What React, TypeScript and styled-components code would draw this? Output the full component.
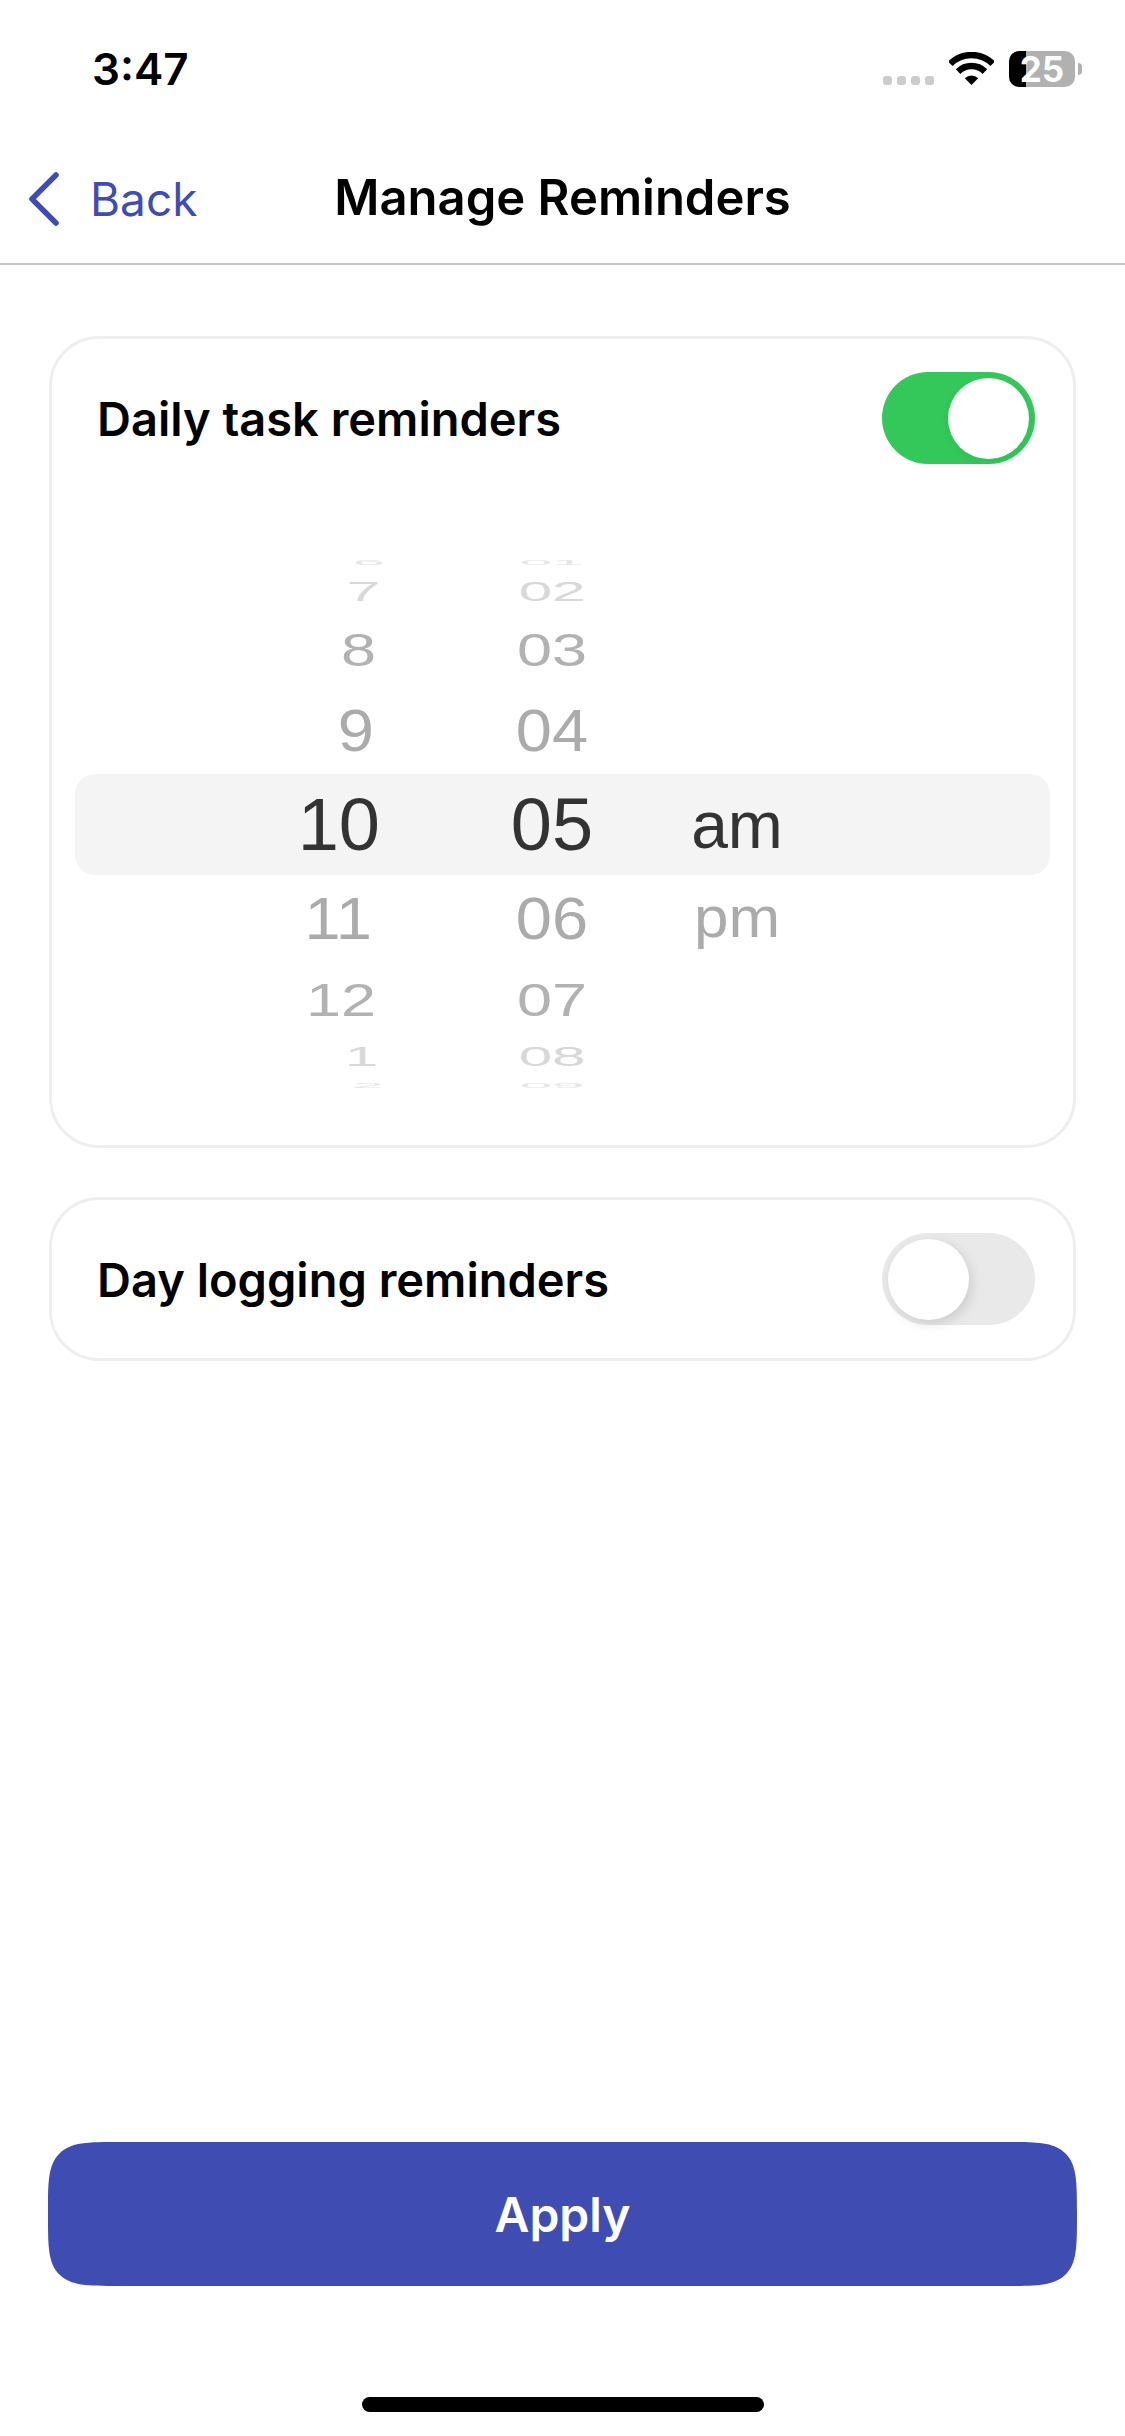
import styled, { createGlobalStyle } from "styled-components";

const GlobalStyle = createGlobalStyle`
  html, body {
    margin: 0;
    padding: 0;
    background: #fff;
  }
`;

const Page = styled.div`
  width: 1125px;
  height: 2436px;
  display: flex;
  flex-direction: column;
  background: #fff;
  font-family: Inter, "Liberation Sans", sans-serif;
  color: #000;
  overflow: hidden;
`;

const StatusBar = styled.div`
  height: 120px;
  box-sizing: border-box;
  padding: 18px 43px 0 92px;
  display: flex;
  align-items: center;
  justify-content: space-between;
`;

const Time = styled.span`
  font-size: 44px;
  font-weight: 600;
  line-height: 1;
`;

const StatusIcons = styled.div`
  display: flex;
  align-items: flex-end;
  gap: 15px;
`;

const SignalDots = styled.div`
  display: flex;
  gap: 5px;
  margin-bottom: 2px;
`;

const Dot = styled.i`
  width: 9px;
  height: 9px;
  border-radius: 3px;
  background: #cccccc;
`;

const Wifi = styled.svg`
  display: block;
  margin-bottom: 2px;
`;

const Battery = styled.div`
  position: relative;
  width: 66px;
  height: 36px;
  margin-right: 7px;
  border-radius: 10px;
  background: linear-gradient(90deg, #000 26%, #b1b1b1 26%);
  color: #fff;
  font-size: 35px;
  font-weight: 700;
  line-height: 36px;
  text-align: center;
  &::after {
    content: "";
    position: absolute;
    right: -7px;
    top: 12px;
    width: 4px;
    height: 12px;
    border-radius: 0 4px 4px 0;
    background: #b1b1b1;
  }
`;

const Header = styled.header`
  height: 145px;
  box-sizing: border-box;
  border-bottom: 2px solid #c4c4c4;
  padding: 14px 0 0;
  display: grid;
  grid-template-columns: 1fr auto 1fr;
  align-items: center;
`;

const BackButton = styled.div`
  display: flex;
  align-items: center;
  gap: 30px;
  padding-left: 28px;
  color: #3f4db3;
  font-size: 46px;
  font-weight: 400;
`;

const Title = styled.h1`
  margin: 0;
  font-size: 49px;
  font-weight: 600;
  line-height: 1.2;
`;

const Content = styled.main`
  flex: 1;
  padding: 71px 49px 0;
  display: flex;
  flex-direction: column;
  gap: 49px;
`;

const Card = styled.section`
  box-sizing: border-box;
  border: 3px solid #eeeeee;
  border-radius: 50px;
  padding: 33px 38px 33px 45px;
`;

const PickerCard = styled(Card)`
  height: 812px;
`;

const SettingRow = styled.div`
  display: flex;
  align-items: center;
  justify-content: space-between;
`;

const SettingLabel = styled.span`
  font-size: 47px;
  font-weight: 600;
`;

const Track = styled.div<{ $on: boolean }>`
  width: 153px;
  height: 92px;
  box-sizing: border-box;
  padding: 6px;
  border-radius: 46px;
  display: flex;
  justify-content: ${(p) => (p.$on ? "flex-end" : "flex-start")};
  background: ${(p) => (p.$on ? "#34c759" : "#e9e9e9")};
`;

const Knob = styled.div<{ $on: boolean }>`
  width: 81px;
  height: 81px;
  margin-top: -0.5px;
  border-radius: 50%;
  background: #fff;
  box-shadow: ${(p) =>
    p.$on ? "0 3px 8px rgba(0,0,0,.05)" : "3px 4px 12px rgba(0,0,0,.12)"};
`;

const Wheel = styled.div`
  position: relative;
  height: 541px;
  margin: 90px -15px 0 -22px;
  display: flex;
`;

const Highlight = styled.div`
  position: absolute;
  left: 0;
  right: 0;
  top: 220px;
  height: 101px;
  border-radius: 20px;
  background: #f4f4f4;
`;

const WheelColumn = styled.div<{ $width: number; $align: string }>`
  position: relative;
  width: ${(p) => p.$width}px;
  display: flex;
  flex-direction: column;
  align-items: ${(p) => p.$align};
`;

const WheelRow = styled.div<{ $h: number }>`
  height: ${(p) => p.$h}px;
  display: flex;
  align-items: center;
`;

const WheelText = styled.span<{ $size: number; $scale: number; $color: string; $dx: number }>`
  font-family: "Liberation Sans", Arial, sans-serif;
  font-size: ${(p) => p.$size}px;
  line-height: 1;
  white-space: nowrap;
  color: ${(p) => p.$color};
  transform: translateX(${(p) => p.$dx}px) scaleY(${(p) => p.$scale});
`;

const Spacer = styled.div`
  width: 100px;
`;

const ApplyButton = styled.button`
  margin: 0 48px;
  height: 144px;
  border: 0;
  border-radius: 48px;
  background: #3f4db3;
  color: #fff;
  font-family: Inter, "Liberation Sans", sans-serif;
  font-size: 48px;
  font-weight: 600;
  @supports (corner-shape: squircle) {
    border-radius: 72px;
    corner-shape: squircle;
  }
`;

const HomeArea = styled.div`
  height: 150px;
  box-sizing: border-box;
  padding-top: 111px;
  display: flex;
  justify-content: center;
`;

const HomeBar = styled.div`
  width: 402px;
  height: 15px;
  border-radius: 8px;
  background: #000;
`;

// height, scaleY, font size, colour of each wheel position, top to bottom
const rows = [
  { h: 16, s: 0.14, size: 58, c: "#e6e6e6" },
  { h: 44, s: 0.46, size: 60, c: "#d8d8d8" },
  { h: 72, s: 0.74, size: 63, c: "#b2b2b2" },
  { h: 89, s: 0.92, size: 65, c: "#ababab" },
  { h: 100, s: 1, size: 74, c: "#333333" },
  { h: 86, s: 0.92, size: 65, c: "#ababab" },
  { h: 78, s: 0.74, size: 63, c: "#b2b2b2" },
  { h: 36, s: 0.46, size: 60, c: "#d8d8d8" },
  { h: 20, s: 0.14, size: 58, c: "#e6e6e6" },
];

const hours = ["6", "7", "8", "9", "10", "11", "12", "1", "2"];
const hourShift = [5, 0, -4, -6, 0, -8, -4, -2, 4];
const minutes = ["01", "02", "03", "04", "05", "06", "07", "08", "09"];
const periods = ["", "", "", "", "am", "pm", "", "", ""];

function Toggle({ on }: { on: boolean }) {
  return (
    <Track $on={on}>
      <Knob $on={on} />
    </Track>
  );
}

function Column({ labels, width, align, shift }: { labels: string[]; width: number; align: string; shift?: number[] }) {
  return (
    <WheelColumn $width={width} $align={align}>
      {labels.map((label, i) => (
        <WheelRow key={i} $h={rows[i].h}>
          <WheelText
            $size={label === "am" ? 66 : label === "pm" ? 62 : rows[i].size}
            $scale={rows[i].s}
            $color={rows[i].c}
            $dx={shift ? shift[i] : 0}
          >
            {label}
          </WheelText>
        </WheelRow>
      ))}
    </WheelColumn>
  );
}

function App() {
  return (
    <Page>
      <GlobalStyle />
      <StatusBar>
        <Time>3:47</Time>
        <StatusIcons>
          <SignalDots>
            <Dot />
            <Dot />
            <Dot />
            <Dot />
          </SignalDots>
          <Wifi width="45" height="33" viewBox="0 0 45 33">
            <path d="M1.3 11.8A30 30 0 0 1 43.7 11.8" fill="none" stroke="#000" strokeWidth="6.5" />
            <path d="M9.1 19.6A19 19 0 0 1 35.9 19.6" fill="none" stroke="#000" strokeWidth="6.5" />
            <path d="M22.5 33L15.8 26.3A9.5 9.5 0 0 1 29.2 26.3Z" fill="#000" />
          </Wifi>
          <Battery>25</Battery>
        </StatusIcons>
      </StatusBar>

      <Header>
        <BackButton>
          <svg width="32" height="56" viewBox="0 0 32 56">
            <path d="M28 4L4 28L28 52" fill="none" stroke="#3f4db3" strokeWidth="5.5" strokeLinecap="round" strokeLinejoin="round" />
          </svg>
          Back
        </BackButton>
        <Title>Manage Reminders</Title>
      </Header>

      <Content>
        <PickerCard>
          <SettingRow>
            <SettingLabel>Daily task reminders</SettingLabel>
            <Toggle on />
          </SettingRow>
          <Wheel>
            <Highlight />
            <Column labels={hours} width={305} align="flex-end" shift={hourShift} />
            <Spacer />
            <Column labels={minutes} width={144} align="center" />
            <Column labels={periods} width={226} align="center" />
          </Wheel>
        </PickerCard>
        <Card>
          <SettingRow>
            <SettingLabel>Day logging reminders</SettingLabel>
            <Toggle on={false} />
          </SettingRow>
        </Card>
      </Content>

      <ApplyButton>Apply</ApplyButton>
      <HomeArea>
        <HomeBar />
      </HomeArea>
    </Page>
  );
}

export default App;
